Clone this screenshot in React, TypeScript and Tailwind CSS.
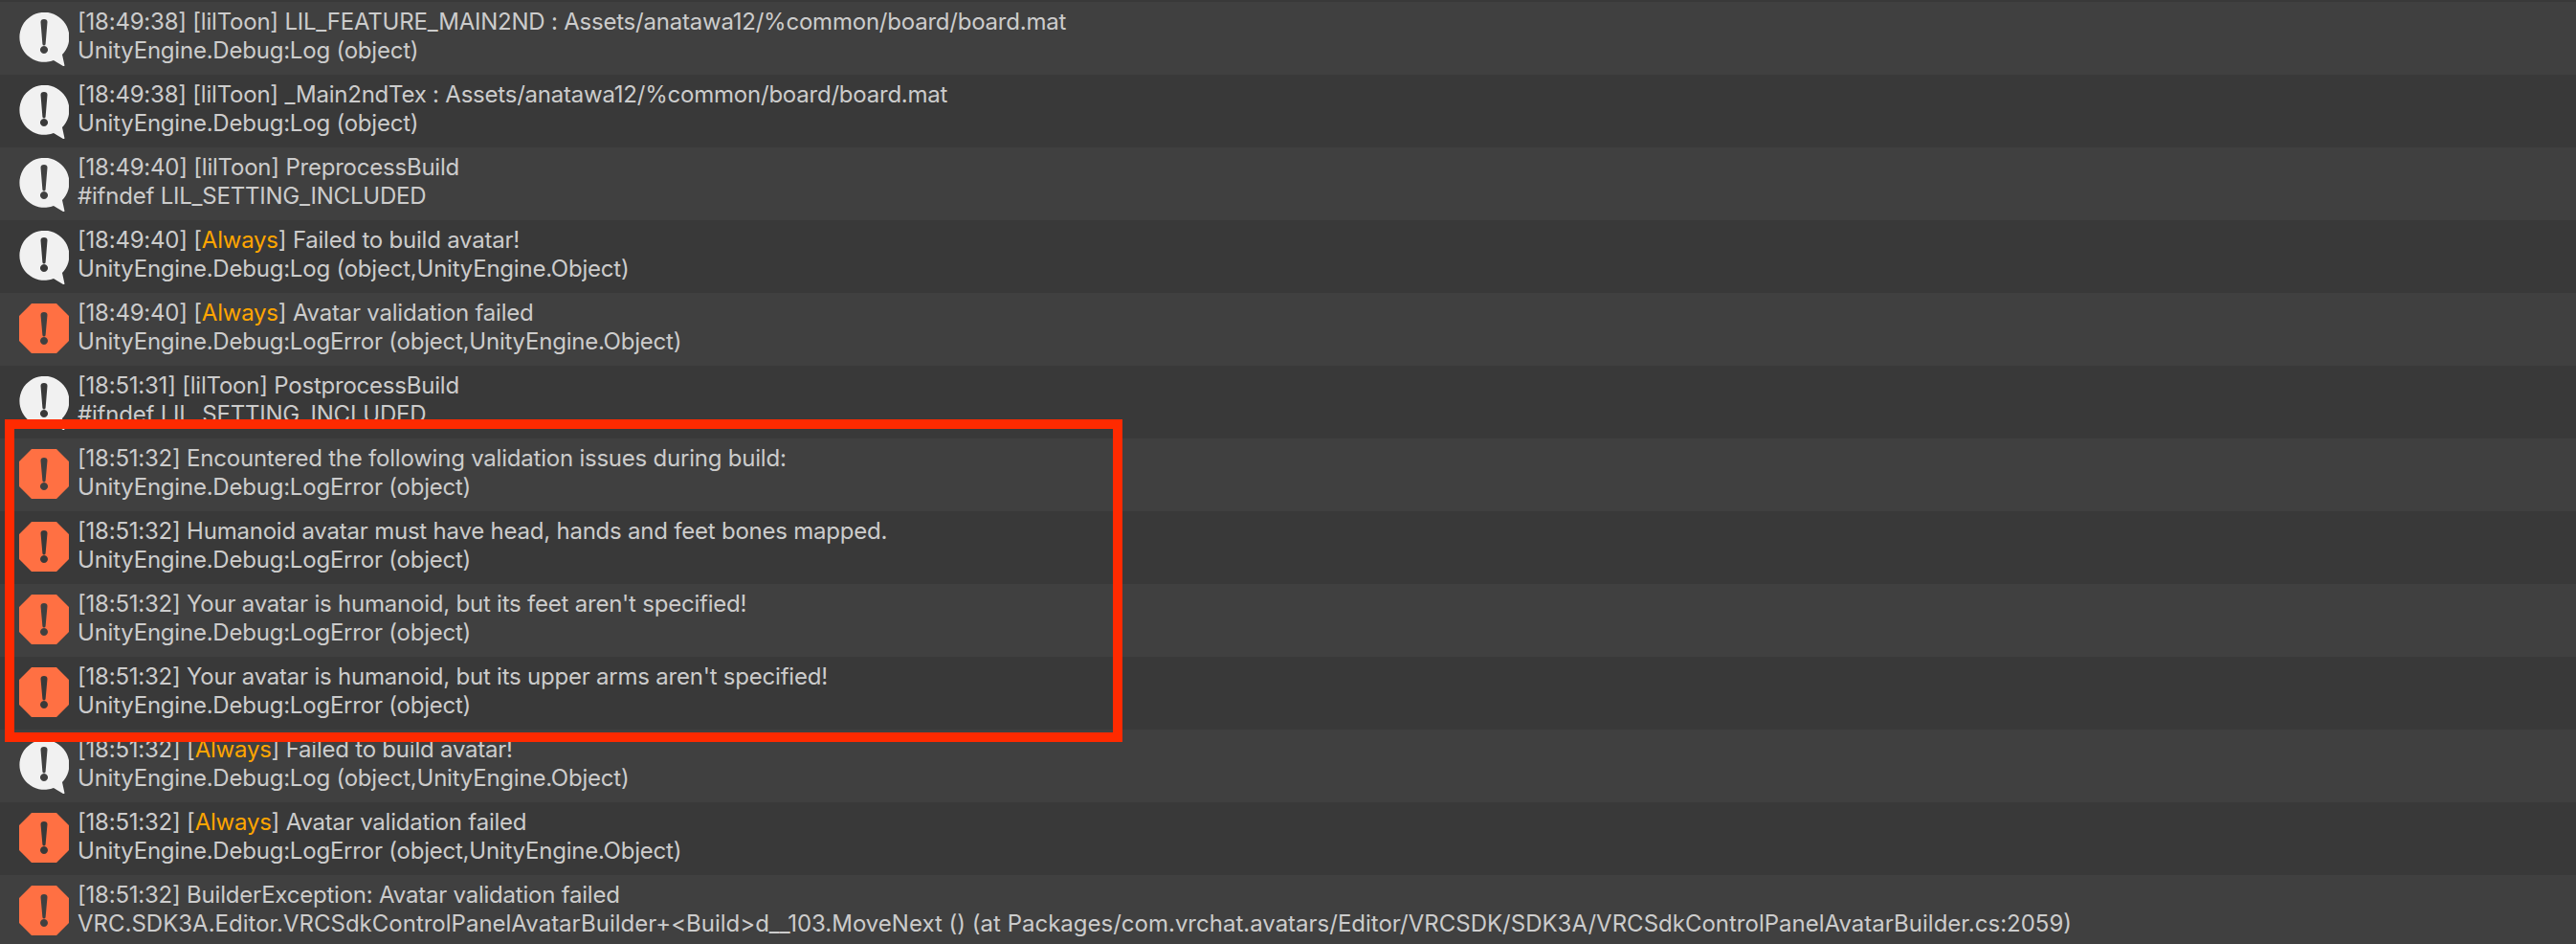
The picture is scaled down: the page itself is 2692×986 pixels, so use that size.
import type { ReactNode } from "react";

type Entry = { level: "log" | "error"; head: ReactNode; trace: string; wideTrace?: boolean };

const always = <span className="text-[#ffa500]">Always</span>;

const entries: Entry[] = [
  { level: "log", head: "[18:49:38] [lilToon] LIL_FEATURE_MAIN2ND : Assets/anatawa12/%common/board/board.mat", trace: "UnityEngine.Debug:Log (object)" },
  { level: "log", head: "[18:49:38] [lilToon] _Main2ndTex : Assets/anatawa12/%common/board/board.mat", trace: "UnityEngine.Debug:Log (object)" },
  { level: "log", head: "[18:49:40] [lilToon] PreprocessBuild", trace: "#ifndef LIL_SETTING_INCLUDED" },
  { level: "log", head: <>[18:49:40] [{always}] Failed to build avatar!</>, trace: "UnityEngine.Debug:Log (object,UnityEngine.Object)" },
  { level: "error", head: <>[18:49:40] [{always}] Avatar validation failed</>, trace: "UnityEngine.Debug:LogError (object,UnityEngine.Object)" },
  { level: "log", head: "[18:51:31] [lilToon] PostprocessBuild", trace: "#ifndef LIL_SETTING_INCLUDED" },
  { level: "error", head: "[18:51:32] Encountered the following validation issues during build:", trace: "UnityEngine.Debug:LogError (object)" },
  { level: "error", head: "[18:51:32] Humanoid avatar must have head, hands and feet bones mapped.", trace: "UnityEngine.Debug:LogError (object)" },
  { level: "error", head: "[18:51:32] Your avatar is humanoid, but its feet aren't specified!", trace: "UnityEngine.Debug:LogError (object)" },
  { level: "error", head: "[18:51:32] Your avatar is humanoid, but its upper arms aren't specified!", trace: "UnityEngine.Debug:LogError (object)" },
  { level: "log", head: <>[18:51:32] [{always}] Failed to build avatar!</>, trace: "UnityEngine.Debug:Log (object,UnityEngine.Object)" },
  { level: "error", head: <>[18:51:32] [{always}] Avatar validation failed</>, trace: "UnityEngine.Debug:LogError (object,UnityEngine.Object)" },
  { level: "error", head: "[18:51:32] BuilderException: Avatar validation failed", trace: "VRC.SDK3A.Editor.VRCSdkControlPanelAvatarBuilder+<Build>d__103.MoveNext () (at Packages/com.vrchat.avatars/Editor/VRCSDK/SDK3A/VRCSdkControlPanelAvatarBuilder.cs:2059)", wideTrace: true },
];

function LogIcon() {
  return (
    <svg viewBox="0 0 52 56" className="w-[52px] h-[56px] shrink-0 text-[#f1f1f1]">
      <path
        fill="currentColor"
        fillRule="evenodd"
        d="M36 50 L46 56 Q47.5 56.5 47.4 55 L45 44 A26 26 0 1 0 36 50 Z M22.5 10 Q22.5 7 26 7 Q29.5 7 29.5 10 L27.6 33 Q27.4 34.5 26 34.5 Q24.6 34.5 24.4 33 Z M26 35 a4 4 0 1 0 0.01 0 Z"
      />
    </svg>
  );
}

function ErrorIcon() {
  return (
    <svg viewBox="0 0 52 52" className="w-[52px] h-[52px] shrink-0 text-[#ff7043]">
      <path
        fill="currentColor"
        fillRule="evenodd"
        d="M13 0 H39 L52 13 V39 L39 52 H13 L0 39 V13 Z M22.5 12 Q22.5 9 26 9 Q29.5 9 29.5 12 L27.6 33 Q27.4 34.5 26 34.5 Q24.6 34.5 24.4 33 Z M26 35 a4 4 0 1 0 0.01 0 Z"
      />
    </svg>
  );
}

function Row({ entry, index }: { entry: Entry; index: number }) {
  return (
    <div className={`h-[76px] flex pl-5 ${index % 2 === 0 ? "bg-[#404040]" : "bg-[#393939]"}`}>
      <div className="w-[61px] pt-[11px] shrink-0">
        {entry.level === "log" ? <LogIcon /> : <ErrorIcon />}
      </div>
      <div className="pt-[6px] text-[24px] leading-[30px] text-[#cccccc] whitespace-nowrap tracking-[-0.22px]">
        <p>{entry.head}</p>
        <p className={entry.wideTrace ? "tracking-normal" : ""}>{entry.trace}</p>
      </div>
    </div>
  );
}

export default function App() {
  return (
    <div className="relative h-[986px] overflow-hidden pt-[2px] bg-[#393939] font-['Inter',sans-serif]">
      {entries.map((entry, i) => (
        <Row key={i} entry={entry} index={i} />
      ))}
      {/* red highlight drawn over the console rows */}
      <div className="absolute left-[5px] top-[438px] w-[1168px] h-[337px] border-[10px] border-[#ff2a00]" />
    </div>
  );
}
